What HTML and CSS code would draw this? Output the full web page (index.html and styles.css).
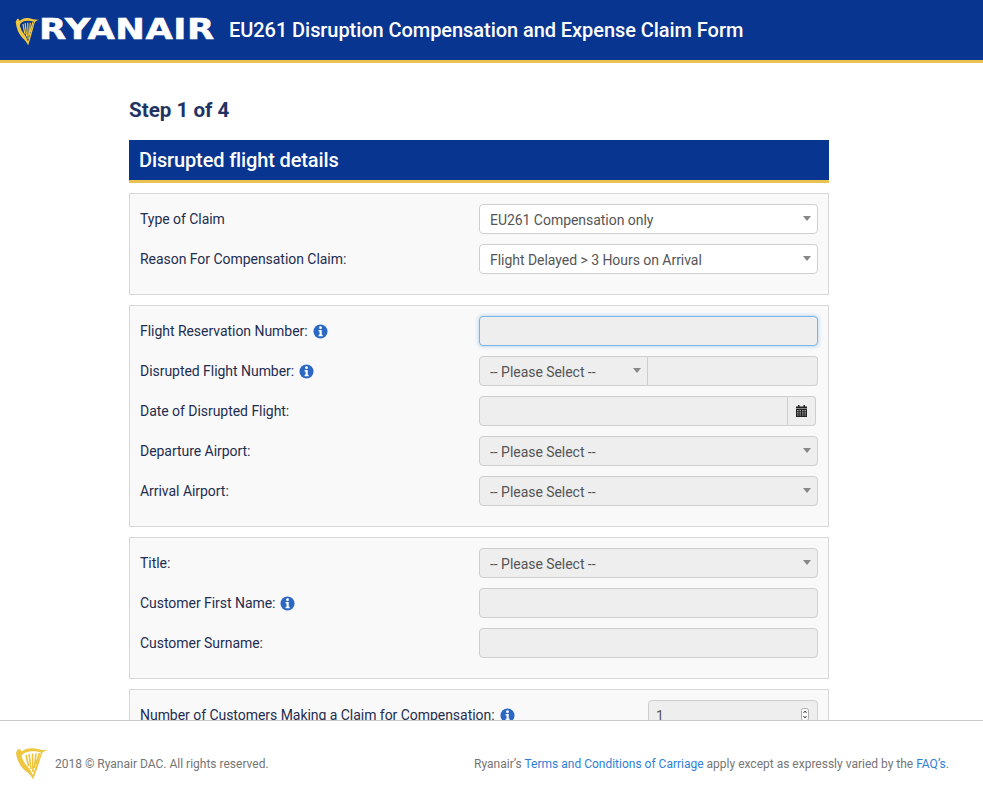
FILE: index.html
```html
<!DOCTYPE html>
<html lang="en">
<head>
<meta charset="utf-8">
<title>EU261 Disruption Compensation and Expense Claim Form</title>
<link rel="stylesheet" href="styles.css">
</head>
<body>
<svg class="defs" width="0" height="0" aria-hidden="true">
  <symbol id="harp" viewBox="0 0 33 33" preserveAspectRatio="none">
    <path d="M1 6C1.500 4 3 1.500 4.500 2C5.500 2.500 6 3.500 6.500 4.500C10 1.500 15 .5 20 1.500C24 2.300 28 3.500 33 3C29 4 27.500 5 26.500 8C24 16 21.500 24 18 32.500C17 29.500 14 26.500 10 23.500C5 19.500 2 13 1 6ZM8 7L6.500 9C7.500 13 10 17 13 20C15 22 16.500 25 17.800 28C20 21 23.500 12 26 5.500C20 3.500 12 3.500 8 7Z" fill="#eec63f"/>
    <path d="M11 8L13.500 19M14 7L16 22M17.500 6.500L18 25M21 6.500L19.500 21M24.500 6L21 17" stroke="#eec63f" stroke-width="1.700" fill="none"/>
  </symbol>
  <symbol id="info" viewBox="0 0 16 16">
    <circle cx="8" cy="8" r="7.500" fill="#2a68c4"/>
    <circle cx="8" cy="4" r="1.500" fill="#fff"/>
    <path d="M6 6.500H9.300V11.500H10.300V13H6V11.500H7V8H6Z" fill="#fff"/>
  </symbol>
</svg>
<header class="topbar">
  <div class="brand">
    <svg class="brand-harp"><use href="#harp"/></svg>
    <span class="brand-name">RYANAIR</span>
  </div>
  <h1 class="topbar-title">EU261 Disruption Compensation and Expense Claim Form</h1>
</header>
<main class="content">
  <div class="wrap">
    <h2 class="step">Step 1 of 4</h2>
    <h3 class="section-head">Disrupted flight details</h3>

    <section class="panel">
      <div class="row">
        <label class="label">Type of Claim</label>
        <div class="field select-box">
          <select class="control white"><option>EU261 Compensation only</option></select>
        </div>
      </div>
      <div class="row">
        <label class="label">Reason For Compensation Claim:</label>
        <div class="field select-box">
          <select class="control white"><option>Flight Delayed &gt; 3 Hours on Arrival</option></select>
        </div>
      </div>
    </section>

    <section class="panel">
      <div class="row">
        <label class="label">Flight Reservation Number: <svg class="info"><use href="#info"/></svg></label>
        <div class="field"><input class="control focus" type="text"></div>
      </div>
      <div class="row">
        <label class="label">Disrupted Flight Number: <svg class="info"><use href="#info"/></svg></label>
        <div class="field group">
          <div class="select-box group-select">
            <select class="control joined-left"><option>-- Please Select --</option></select>
          </div>
          <input class="control joined-right" type="text">
        </div>
      </div>
      <div class="row">
        <label class="label">Date of Disrupted Flight:</label>
        <div class="field group date">
          <input class="control joined-left-date" type="text">
          <span class="addon">
            <svg class="cal" viewBox="0 0 11 12"><path d="M2 0h1.500v1.500h4V0H9v1.500h2V3H0V1.500h2zM0 3.500h11V12H0z" fill="#222"/><path d="M1 5h1.500v1.200H1zM3.500 5H5v1.200H3.500zM6 5h1.500v1.200H6zM8.500 5H10v1.200H8.500zM1 7.200h1.500v1.200H1zM3.500 7.200H5v1.200H3.500zM6 7.200h1.500v1.200H6zM8.500 7.200H10v1.200H8.500zM1 9.400h1.500v1.200H1zM3.500 9.400H5v1.200H3.500zM6 9.400h1.500v1.200H6zM8.500 9.400H10v1.200H8.500z" fill="#aaa"/></svg>
          </span>
        </div>
      </div>
      <div class="row">
        <label class="label">Departure Airport:</label>
        <div class="field select-box"><select class="control"><option>-- Please Select --</option></select></div>
      </div>
      <div class="row">
        <label class="label">Arrival Airport:</label>
        <div class="field select-box"><select class="control"><option>-- Please Select --</option></select></div>
      </div>
    </section>

    <section class="panel">
      <div class="row">
        <label class="label">Title:</label>
        <div class="field select-box"><select class="control"><option>-- Please Select --</option></select></div>
      </div>
      <div class="row">
        <label class="label">Customer First Name: <svg class="info"><use href="#info"/></svg></label>
        <div class="field"><input class="control" type="text"></div>
      </div>
      <div class="row">
        <label class="label">Customer Surname:</label>
        <div class="field"><input class="control" type="text"></div>
      </div>
    </section>

    <section class="panel">
      <div class="row row-between">
        <label class="label label-auto">Number of Customers Making a Claim for Compensation: <svg class="info"><use href="#info"/></svg></label>
        <div class="field number">
          <input class="control number-input" type="text" value="1">
          <svg class="spin" viewBox="0 0 8 13"><rect x=".5" y=".5" width="7" height="12" rx="2" fill="#fff" stroke="#aaa"/><path d="M2.500 5L4 3l1.500 2M2.500 8L4 10l1.500-2" fill="none" stroke="#444"/></svg>
        </div>
      </div>
    </section>
  </div>
</main>
<footer class="footer">
  <div class="footer-left">
    <svg class="footer-harp"><use href="#harp"/></svg>
    <span>2018 © Ryanair DAC. All rights reserved.</span>
  </div>
  <p class="footer-right">Ryanair’s <a href="#">Terms and Conditions of Carriage</a> apply except as expressly varied by the <a href="#">FAQ’s</a>.</p>
</footer>
</body>
</html>
```
FILE: styles.css
```css
* { box-sizing: border-box; }
html, body { height: 100%; }
body {
  margin: 0;
  display: flex;
  flex-direction: column;
  overflow: hidden;
  background: #fff;
  font-family: Roboto, "Liberation Sans", sans-serif;
  font-size: 14px;
  color: #1e2d50;
}
.defs { display: block; height: 0; }

.topbar {
  flex: none;
  height: 63px;
  background: #073590;
  border-bottom: 3px solid #e8c34f;
  display: flex;
  align-items: center;
  padding-left: 15px;
  color: #fff;
}
.brand { display: flex; align-items: center; width: 214px; flex: none; }
.brand-harp { width: 24px; height: 29px; flex: none; margin-top: 3px; }
.brand-name {
  font-family: "DejaVu Sans", sans-serif;
  font-weight: 700;
  font-size: 28.500px;
  line-height: 1;
  letter-spacing: .4px;
  -webkit-text-stroke: .5px #fff;
  transform: scaleX(1.24);
  transform-origin: left center;
}
.topbar-title { margin: 0; font-size: 20px; font-weight: 500; letter-spacing: -.06px; white-space: nowrap; }

.content { flex: 1; min-height: 0; overflow: hidden; }
.wrap { width: 700px; margin-left: 129px; }
.step { margin: 0; padding-top: 35px; height: 77px; font-size: 20.600px; line-height: 24px; font-weight: 700; color: #1f3463; }
.section-head {
  margin: 0 0 10px;
  height: 43px;
  padding-left: 10px;
  background: #073590;
  border-bottom: 3px solid #e8c34f;
  color: #fff;
  font-size: 20px;
  font-weight: 500;
  letter-spacing: -.13px;
  line-height: 40px;
}
.panel {
  border: 1px solid #d8d8d8;
  background: #f9f9f9;
  padding: 10px;
  margin-bottom: 10px;
}
.row { display: flex; align-items: center; height: 30px; margin-bottom: 10px; }
.row-between { justify-content: space-between; }
.label { width: 339px; flex: none; display: flex; align-items: center; gap: 5px; white-space: nowrap; letter-spacing: -.04px; }
.label-auto { width: auto; }
.info { width: 15px; height: 15px; flex: none; }
.field { flex: 1; min-width: 0; height: 30px; position: relative; }
.control {
  display: block;
  width: 100%;
  height: 30px;
  margin: 0;
  padding: 1px 10px 0;
  border: 1px solid #cfcfcf;
  border-radius: 4px;
  background: #eee;
  color: #555;
  font: 14px Roboto, "Liberation Sans", sans-serif;
  letter-spacing: -.04px;
  appearance: none;
  -webkit-appearance: none;
  outline: 0;
}
.control.white { background: #fff; }
.control.focus { border-color: #7db5e2; box-shadow: 0 0 4px rgba(102, 175, 233, .6); }
.select-box::after {
  content: "";
  position: absolute;
  right: 7px;
  top: 12px;
  border-left: 4px solid transparent;
  border-right: 4px solid transparent;
  border-top: 5px solid #888;
  pointer-events: none;
}
.group { display: flex; }
.group-select { width: 169px; flex: none; position: relative; }
.joined-left { border-radius: 4px 0 0 4px; }
.joined-right { flex: 1; min-width: 0; border-left: 0; border-radius: 0 4px 4px 0; }
.date { padding-right: 2px; }
.joined-left-date { flex: 1; min-width: 0; border-radius: 4px 0 0 4px; }
.addon {
  width: 28px;
  flex: none;
  display: flex;
  align-items: center;
  justify-content: center;
  background: #eee;
  border: 1px solid #cfcfcf;
  border-left: 0;
  border-radius: 0 4px 4px 0;
}
.cal { width: 11px; height: 12px; }
.number { flex: none; width: 170px; }
.number-input { padding-left: 7px; }
.spin { position: absolute; right: 9px; top: 8px; width: 8px; height: 13px; }

.footer {
  flex: none;
  height: 68px;
  background: #fff;
  border-top: 1px solid #ccc;
  display: flex;
  align-items: center;
  justify-content: space-between;
  padding: 18px 34px 0 15px;
  font-size: 12px;
  color: #757575;
}
.footer-left { display: flex; align-items: center; gap: 7px; }
.footer-harp { width: 33px; height: 33px; flex: none; }
.footer-right { margin: 0; }
.footer-right a { color: #2f7fd6; text-decoration: none; }
```
